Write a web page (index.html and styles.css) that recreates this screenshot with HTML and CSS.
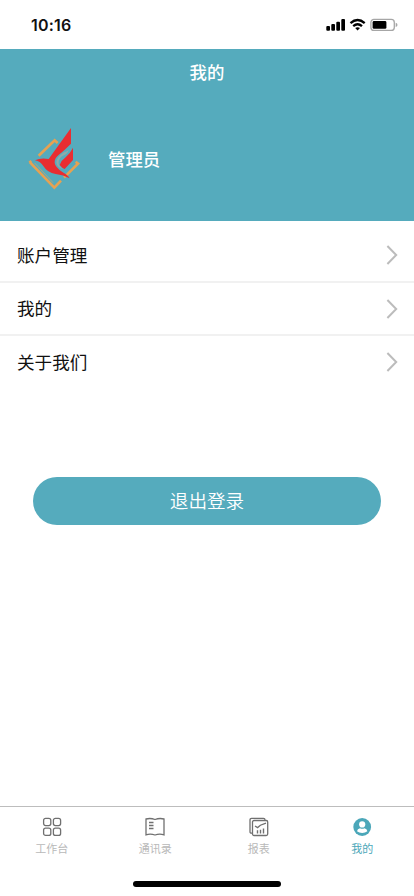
FILE: index.html
```html
<!DOCTYPE html>
<html lang="zh-CN">
<head>
<meta charset="utf-8">
<meta name="viewport" content="width=device-width, initial-scale=1">
<title>我的</title>
<link rel="stylesheet" href="styles.css">
</head>
<body>
<div class="screen">
  <div class="status">
    <span class="time">10:16</span>
    <svg class="signals" width="74" height="16" viewBox="0 0 74 16">
      <rect x="0.3" y="9" width="3.7" height="4.7" rx="1"/>
      <rect x="5.3" y="7" width="3.7" height="6.7" rx="1"/>
      <rect x="10.3" y="4.7" width="3.7" height="9" rx="1"/>
      <rect x="15.3" y="2" width="3.7" height="11.7" rx="1"/>
      <path d="M24.5 6.1Q31.6 -.2 38.7 6.1M27.2 9.1Q31.6 5.3 36 9.1" fill="none" stroke="#000" stroke-width="2.3"/>
      <path d="M29.2 11.1Q31.6 9.2 34 11.1L31.6 13.5Z"/>
      <rect x="44.9" y="2.4" width="23.4" height="11" rx="3" fill="#fff" stroke="#a6a6a6" stroke-width="1.3"/>
      <rect x="46.6" y="4" width="13.8" height="7.8" rx="1.4"/>
      <path d="M69.7 5.8Q71.5 6.4 71.5 7.9T69.7 10Z" fill="#a6a6a6"/>
    </svg>
  </div>
  <header class="header">
    <h1 class="title">我的</h1>
    <div class="profile">
      <svg class="logo" width="80" height="85" viewBox="0 0 240 255">
        <path d="M71 122L119 76L128 84M43 143L49 138M45 142L118 218L138 197M147 188L189 146L182 140" fill="none" stroke="#e6a252" stroke-width="8"/>
        <path d="M59 144L114 203" fill="none" stroke="#e6a252" stroke-width="2"/>
        <path d="M168 39L168 86Q148 106 130 121Q118 131 119 144Q121 157 142 171Q158 179 164 190Q146 180 122 177Q97 173 85 153Q77 140 60 136Q78 127 101 132Z" fill="#e92d31"/>
        <path d="M174 98V135L149 162Q141 159 134 150Q139 136 152 127Q165 116 174 98Z" fill="#e92d31"/>
        <path d="M147 112Q154 111 161 105Q157 118 147 121Q130 128 131 145Q132 154 145 163Q126 157 124 143Q123 128 147 112Z" fill="#8daaa9"/>
      </svg>
      <span class="name">管理员</span>
    </div>
  </header>
  <main class="main">
    <div class="row"><span>账户管理</span><svg class="chevron" width="12" height="20" viewBox="0 0 12 20"><path d="M1.4 1L10.2 10L1.4 19"/></svg></div>
    <div class="row"><span>我的</span><svg class="chevron" width="12" height="20" viewBox="0 0 12 20"><path d="M1.4 1L10.2 10L1.4 19"/></svg></div>
    <div class="row"><span>关于我们</span><svg class="chevron" width="12" height="20" viewBox="0 0 12 20"><path d="M1.4 1L10.2 10L1.4 19"/></svg></div>
    <button class="logout">退出登录</button>
  </main>
  <nav class="tabs">
    <div class="tab">
      <svg class="icon" width="20" height="20" viewBox="0 0 20 20"><rect x="1.6" y="1.4" width="7.2" height="7.2" rx="2"/><rect x="11.4" y="1.4" width="7.2" height="7.2" rx="2"/><rect x="1.6" y="11.2" width="7.2" height="7.2" rx="2"/><rect x="11.4" y="11.2" width="7.2" height="7.2" rx="2"/></svg>
      <span>工作台</span>
    </div>
    <div class="tab">
      <svg class="icon" width="20" height="20" viewBox="0 0 20 20"><path d="M1 2Q5.5 .8 10 2.5Q14.5 .8 19 2V17.8Q14.5 16.5 10 18Q5.5 16.5 1 17.8Z"/><path d="M4 5.5H8.5M4 8.5H8.5M4 11.5H8.5"/></svg>
      <span>通讯录</span>
    </div>
    <div class="tab">
      <svg class="icon" width="20" height="20" viewBox="0 0 20 20"><path d="M3.5 16.2H2.5Q1 16.2 1 14.7V3Q1 1.4 2.6 1.4H14.5Q16 1.4 16 3"/><rect x="3.5" y="3.5" width="15.2" height="15" rx="1.5"/><path d="M6 9L8.6 10.6L11.4 8.2L17 6.2"/><path d="M8.5 13.2V16.4M11.5 12.8V16.4M14.5 11.5V16.4" stroke-width="1.4"/></svg>
      <span>报表</span>
    </div>
    <div class="tab active">
      <svg width="20" height="20" viewBox="0 0 20 20"><circle cx="10.2" cy="10" r="8.9" fill="#4ba7b9"/><circle cx="10.2" cy="7.4" r="3.1" fill="#fff"/><path d="M5 14.2Q5.4 11.5 8 11.2Q10.2 12.3 12.4 11.2Q15 11.5 15.4 14.2Q13.2 16 10.2 16T5 14.2Z" fill="#fff"/></svg>
      <span>我的</span>
    </div>
  </nav>
  <div class="home"></div>
</div>
</body>
</html>
```
FILE: styles.css
```css
* { box-sizing: border-box; }
body {
  margin: 0;
  background: #fff;
  color: #111;
  font-family: "Noto Sans CJK SC", sans-serif;
}
.screen {
  width: 414px;
  height: 896px;
  display: flex;
  flex-direction: column;
  overflow: hidden;
}
.status {
  height: 49px;
  padding: 1px 14px 0 31px;
  display: flex;
  align-items: center;
  justify-content: space-between;
}
.time {
  font: 600 16px/20px Inter, sans-serif;
  letter-spacing: 0.2px;
}
.header {
  height: 172px;
  background: #55abbd;
  color: #fff;
}
.title {
  margin: 0;
  padding-top: 11px;
  height: 66px;
  font-size: 17.4px;
  font-weight: 500;
  line-height: 24px;
  text-align: center;
}
.profile {
  display: flex;
  align-items: center;
  height: 85px;
  padding-left: 15px;
}
.name {
  margin: 1px 0 0 13px;
  font-size: 17.4px;
  font-weight: 500;
}
.main {
  flex: 1;
  padding-top: 8px;
}
.row {
  height: 52px;
  padding: 0 16px 0 17px;
  display: flex;
  align-items: center;
  justify-content: space-between;
  font-size: 17.6px;
  line-height: 24px;
}
.row span { margin-bottom: 1px; }
.row + .row {
  height: 53px;
  border-top: 2px solid #f1f1f1;
}
.row:nth-child(3) { height: 54px; }
.chevron {
  fill: none;
  stroke: #bcbcbc;
  stroke-width: 2;
}
.logout {
  display: block;
  width: 348px;
  height: 48px;
  margin: 89px 0 0 33px;
  padding: 0 0 2px;
  border: 0;
  border-radius: 24px;
  background: #55abbd;
  color: #fff;
  font: 350 18.6px/46px "Noto Sans CJK SC", sans-serif;
}
.tabs {
  height: 75px;
  padding-top: 10px;
  display: flex;
  border-top: 1px solid #bdbdbd;
}
.tab {
  flex: 1;
  display: flex;
  flex-direction: column;
  align-items: center;
  gap: 3px;
  color: #b9b9b9;
  font-size: 11px;
  line-height: 16px;
}
.active { color: #4ba7b9; }
.icon {
  fill: none;
  stroke: #707070;
  stroke-width: 1.3;
}
.home {
  width: 148px;
  height: 6px;
  margin: 0 auto 9px;
  border-radius: 3px;
  background: #000;
}
```
